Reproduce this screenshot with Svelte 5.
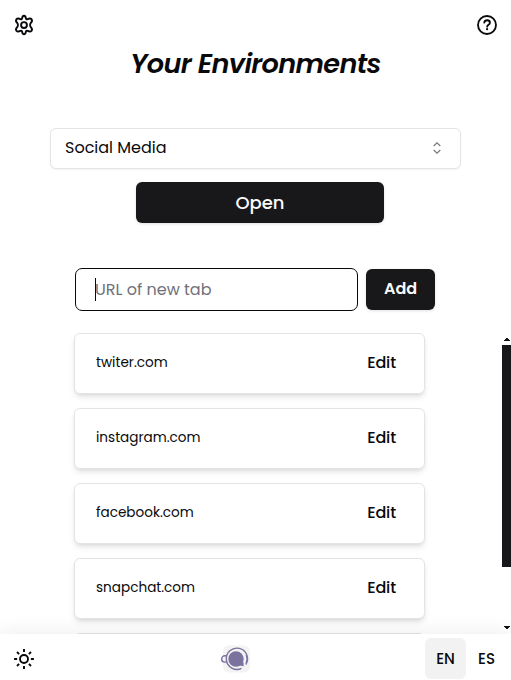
<script>
  const tabs = ['twiter.com', 'instagram.com', 'facebook.com', 'snapchat.com'];
</script>

<div class="app">
  <header>
    <svg class="icon" viewBox="0 0 24 24" fill="none" stroke="currentColor" stroke-width="2.300" stroke-linejoin="round"><path d="M12 .9c1.600 0 2 1.300 2.200 2.800.2 1.200 1 1.700 2.100 1.200 1.800-.8 3.700-1.200 4.900.4 1.100 1.800.1 3-1 4.100-1.200 1.300-1.200 3.900 0 5.200 1.100 1.100 2.100 2.300 1 4.100-1.200 1.600-3.100 1.200-4.900.4-1.100-.5-1.900 0-2.100 1.200-.2 1.500-.6 2.800-2.200 2.800s-2-1.300-2.200-2.800c-.2-1.200-1-1.700-2.100-1.200-1.800.8-3.700 1.200-4.900-.4-1.100-1.800-.1-3 1-4.100 1.200-1.300 1.200-3.900 0-5.200-1.100-1.100-2.100-2.300-1-4.100 1.200-1.600 3.100-1.200 4.900-.4 1.100.5 1.900 0 2.100-1.200C10 2.200 10.400.9 12 .9Z" /><circle cx="12" cy="12" r="3.500" /></svg>
    <svg class="icon" viewBox="0 0 24 24"><g fill="none" stroke="currentColor" stroke-width="2.200" stroke-linecap="round"><circle cx="12" cy="12" r="10.800" /><path d="M8.700 9.200c.3-1.900 1.600-2.900 3.400-2.900 2 0 3.400 1.200 3.400 2.900 0 2.500-3.300 2.500-3.300 4.800" /></g><circle cx="12.100" cy="17" r="1.300" fill="currentColor" /></svg>
  </header>
  <h1>Your Environments</h1>

  <button class="select">
    <span>Social Media</span>
    <svg width="16" height="16" viewBox="0 0 16 16" fill="none" stroke="#777" stroke-width="1.150"><path d="M4.700 6 8 2.800 11.300 6M4.700 10 8 13.200 11.300 10" /></svg>
  </button>
  <button class="dark open"><span>Open</span></button>

  <div class="new-tab">
    <div class="field"><i class="caret"></i><span>URL of new tab</span></div>
    <button class="dark add"><span>Add</span></button>
  </div>

  <div class="scroller">
    <ul>
      {#each tabs as tab}
        <li>
          <span class="url">{tab}</span>
          <span class="edit">Edit</span>
        </li>
      {/each}
      <li></li>
    </ul>
    <div class="scrollbar">
      <svg width="6" height="3" viewBox="0 0 6 3" shape-rendering="crispEdges"><path fill="#111" d="M0 2h6v1H0zM1 1h4v1H1zM2 0h2v1H2z" /></svg>
      <div class="thumb"></div>
      <svg class="down" width="6" height="3" viewBox="0 0 6 3" shape-rendering="crispEdges"><path fill="#111" d="M0 0h6v1H0zM1 1h4v1H1zM2 2h2v1H2z" /></svg>
    </div>
  </div>

  <footer>
    <svg class="icon sun" viewBox="0 0 20 20" fill="none" stroke="currentColor" stroke-width="1.900"><circle cx="10" cy="10" r="4" /><path d="M10 .1v3M10 16.900v3M.1 10h3M16.900 10h3M3 3l2.100 2.100M14.900 14.900l2.100 2.100M3 17l2.100-2.100M14.900 5.100l2.100-2.100" /></svg>
    <svg class="logo" width="32" height="28" viewBox="0 0 32 28">
      <rect x="3" y=".5" width="27" height="27" rx="6" fill="#f3f3f3" />
      <g fill="none" stroke="#7c729f" stroke-width="1.400">
        <path d="M25.800 19.500A10.600 10.600 0 1 0 21.500 23.300M26.200 18.200A10.400 10.400 0 0 0 26.300 9.800" />
        <path d="M6.700 10.800H4.800a3.100 3.100 0 0 0 0 6.300h1.900" />
      </g>
      <circle cx="16" cy="14" r="7.700" fill="#7c729f" />
      <path d="m17 20 6.500-3 .2 4.200Z" fill="#7c729f" />
    </svg>
    <div class="langs"><span class="lang active">EN</span><span class="lang">ES</span></div>
  </footer>
</div>

<style>
  :global(body) { margin: 0; background: #fff; }
  .app {
    width: 511px; height: 680px; box-sizing: border-box; overflow: hidden;
    display: flex; flex-direction: column; align-items: center;
    font-family: Poppins, Inter, sans-serif; font-size: 16px; color: #09090b;
  }
  header { width: 100%; height: 45px; box-sizing: border-box; padding: 15px 14px 0; display: flex; justify-content: space-between; align-items: flex-start; }
  .icon { width: 20px; height: 20px; display: block; overflow: visible; }
  h1 { margin: 0; height: 83px; line-height: 37px; font-size: 27.200px; font-weight: 600; font-style: italic; letter-spacing: -0.680px; white-space: nowrap; }
  button { font: inherit; color: inherit; margin: 0; border: 0; box-sizing: border-box; flex: none; }
  .select {
    width: 411px; height: 41px; display: flex; align-items: center; justify-content: space-between;
    padding: 0 15px 2px 14px; border: 1px solid #e4e4e7; border-radius: 6px; background: #fff;
    box-shadow: 0 1px 2px rgba(0, 0, 0, 0.05);
  }
  .dark { height: 41px; padding: 0; border-radius: 6px; background: #18181b; color: #fafafa; box-shadow: 0 1px 3px rgba(0, 0, 0, 0.12); white-space: nowrap; }
  .open { width: 248px; margin: 13px 0 0 9px; font-size: 18px; font-weight: 500; }
  .new-tab { margin-top: 45px; width: 361px; display: flex; align-items: center; gap: 8px; flex: none; }
  .field {
    width: 283px; height: 43px; box-sizing: border-box; border: 1.500px solid #09090b; border-radius: 7px;
    display: flex; align-items: center; padding-left: 19px; color: #71717a;
  }
  .caret { width: 1px; height: 23px; margin-right: -1px; background: #09090b; }
  .add { width: 69px; font-weight: 600; padding-bottom: 2px; }
  .scroller { width: 511px; height: 312px; margin-top: 11px; display: flex; justify-content: space-between; overflow: hidden; flex: none; }
  ul { list-style: none; margin: 0; padding: 11px 0 0 74px; display: flex; flex-direction: column; gap: 14px; }
  li {
    width: 351px; height: 61px; box-sizing: border-box; flex: none; display: flex; align-items: center; justify-content: space-between;
    padding: 0 28px 2px 21px; border: 1px solid #e4e4e7; border-radius: 6px; background: #fff;
    box-shadow: 0 4px 6px -1px rgba(0, 0, 0, 0.1), 0 2px 4px -2px rgba(0, 0, 0, 0.1);
  }
  .url { font-size: 13.600px; }
  .edit { font-weight: 500; letter-spacing: -0.150px; }
  .scrollbar { width: 9px; padding-top: 16px; display: flex; flex-direction: column; align-items: center; }
  .scrollbar svg { flex: none; }
  .thumb { width: 9px; height: 222px; margin-top: 4px; background: #18181b; flex: none; }
  .down { margin-top: 59px; }
  footer {
    width: 100%; height: 46px; flex: none; box-sizing: border-box; padding: 4px 4px 1px 14px; background: #fff;
    display: flex; align-items: center; box-shadow: 0 -4px 18px rgba(0, 0, 0, 0.06); z-index: 1;
  }
  .sun { margin-top: 1px; }
  .logo { margin: 1px 0 0 186px; }
  .langs { display: flex; margin-left: auto; }
  .lang { width: 41px; height: 41px; line-height: 41px; text-align: center; font-weight: 500; border-radius: 6px; font-size: 15px; }
  .active { background: #f2f2f3; }
</style>
